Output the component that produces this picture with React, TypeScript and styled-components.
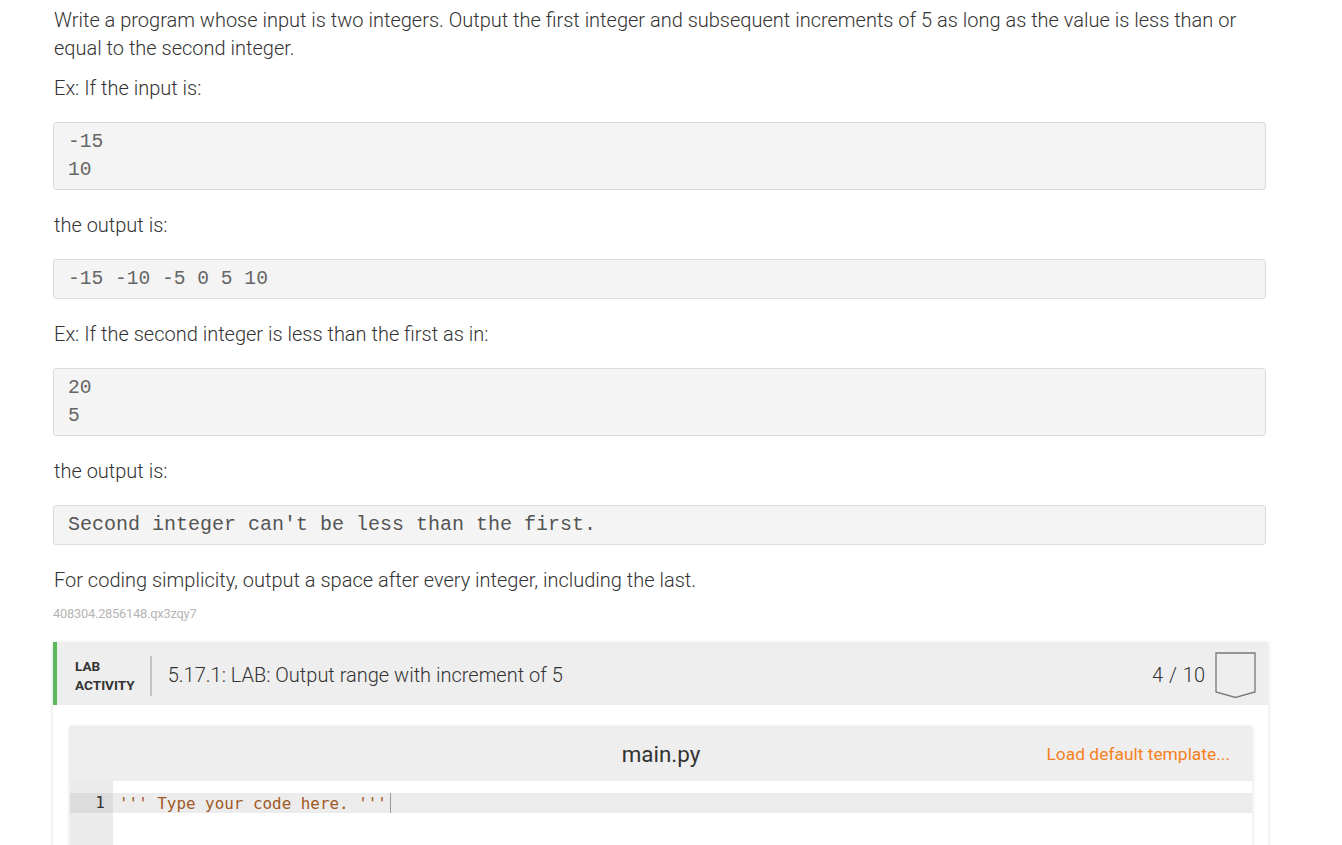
import React from "react";
import styled, { createGlobalStyle } from "styled-components";

const Global = createGlobalStyle`
  html, body { margin: 0; padding: 0; background: #fff; }
  body { font-family: Roboto, "Noto Sans", Arial, sans-serif; color: #333; }
`;

const Page = styled.div`
  padding: 6px 76px 40px 53px;
  width: 1213px;
`;

const Para = styled.p`
  margin: 12px 0;
  font-size: 20px;
  font-weight: 300;
  line-height: 28px;
  color: #333;
  padding-left: 1px;
  &:first-child { margin-top: 0; }
`;

const Pre = styled.pre<{ $courier?: boolean }>`
  margin: 20px 0 21px;
  padding: 5px 14px 5px;
  background: #f4f4f4;
  border: 1px solid #dcdcdc;
  border-radius: 3px;
  font-family: "Liberation Mono", "Courier New", monospace;
  font-size: ${(p) => (p.$courier ? "20px" : "19.6px")};
  line-height: 28px;
  color: ${(p) => (p.$courier ? "#555" : "#666")};
  white-space: pre;
`;

const Ident = styled.div`
  margin-top: 12px;
  font-size: 12.8px;
  line-height: 16px;
  color: #b5b5b5;
  font-weight: 400;
  letter-spacing: -0.2px;
`;

const Card = styled.section`
  margin-top: 20px;
  width: 1215px;
  background: #fff;
  box-shadow: 0 1px 4px rgba(0, 0, 0, 0.16);
`;

const CardHeader = styled.header`
  display: flex;
  align-items: center;
  height: 63px;
  background: #eeeeee;
  border-left: 4px solid #5cb85c;
  padding: 0 12px 0 18px;
`;

const Kind = styled.div`
  font-size: 13.6px;
  font-weight: 700;
  line-height: 19px;
  color: #333;
  margin-top: 4px;
`;

const Divider = styled.div`
  width: 2px;
  height: 40px;
  background: #c2c2c2;
  margin: 4px 16px 0 15px;
`;

const Title = styled.h2`
  flex: 1;
  margin: 2px 0 0;
  font-size: 20px;
  font-weight: 300;
  color: #333;
`;

const Score = styled.span`
  font-size: 20px;
  font-weight: 300;
  color: #333;
  margin: 2px 10px 0 0;
  word-spacing: 1px;
`;

const Badge = styled.svg`
  display: block;
  width: 41px;
  height: 46px;
  margin-top: 2px;
`;

const CardBody = styled.div`
  padding: 21px 16px 0 17px;
`;

const Editor = styled.div`
  background: #fff;
  box-shadow: 0 1px 4px rgba(0, 0, 0, 0.16);
`;

const EditorBar = styled.div`
  position: relative;
  display: flex;
  align-items: center;
  justify-content: center;
  height: 55px;
  background: #eeeeee;
`;

const FileName = styled.span`
  font-size: 22.4px;
  font-weight: 400;
  color: #333;
`;

const LoadLink = styled.a`
  position: absolute;
  right: 22px;
  top: 50%;
  transform: translateY(-50%);
  font-size: 17.4px;
  font-weight: 400;
  color: #f5821f;
  text-decoration: none;
`;

const Code = styled.div`
  display: grid;
  grid-template-columns: 43px 1fr;
  min-height: 140px;
`;

const Gutter = styled.div`
  background: #ebebeb;
  padding-top: 12px;
`;

const LineNo = styled.div<{ $active?: boolean }>`
  height: 20px;
  line-height: 20px;
  text-align: right;
  padding-right: 8px;
  font-family: "DejaVu Sans Mono", "Liberation Mono", monospace;
  font-size: 16px;
  color: #333;
  background: ${(p) => (p.$active ? "#dcdcdc" : "transparent")};
`;

const Lines = styled.div`
  padding-top: 12px;
`;

const Line = styled.div<{ $active?: boolean }>`
  display: flex;
  align-items: center;
  height: 20px;
  padding-left: 6px;
  background: ${(p) => (p.$active ? "#ececec" : "transparent")};
  font-family: "DejaVu Sans Mono", "Liberation Mono", monospace;
  font-size: 15.9px;
  color: #a0591f;
  white-space: pre;
`;

const Cursor = styled.span`
  display: inline-block;
  width: 1px;
  height: 20px;
  background: #999;
  margin-left: 3px;
`;

export default function App() {
  return (
    <>
      <Global />
      <Page>
        <Para>
          Write a program whose input is two integers. Output the first integer and subsequent
          increments of 5 as long as the value is less than or equal to the second integer.
        </Para>
        <Para>Ex: If the input is:</Para>
        <Pre>{"-15\n10"}</Pre>
        <Para>the output is:</Para>
        <Pre>-15 -10 -5 0 5 10</Pre>
        <Para>Ex: If the second integer is less than the first as in:</Para>
        <Pre>{"20\n5"}</Pre>
        <Para>the output is:</Para>
        <Pre $courier>Second integer can't be less than the first.</Pre>
        <Para>For coding simplicity, output a space after every integer, including the last.</Para>
        <Ident>408304.2856148.qx3zqy7</Ident>
        <Card>
          <CardHeader>
            <Kind>
              LAB
              <br />
              ACTIVITY
            </Kind>
            <Divider />
            <Title>5.17.1: LAB: Output range with increment of 5</Title>
            <Score>4 / 10</Score>
            <Badge viewBox="0 0 41 46">
              <polygon
                points="1,1 40,1 40,40 20.5,45.5 1,40"
                fill="none"
                stroke="#777"
                strokeWidth="1.3"
              />
            </Badge>
          </CardHeader>
          <CardBody>
            <Editor>
              <EditorBar>
                <FileName>main.py</FileName>
                <LoadLink href="#">Load default template...</LoadLink>
              </EditorBar>
              <Code>
                <Gutter>
                  <LineNo $active>1</LineNo>
                </Gutter>
                <Lines>
                  <Line $active>
                    ''' Type your code here. '''
                    <Cursor />
                  </Line>
                </Lines>
              </Code>
            </Editor>
          </CardBody>
        </Card>
      </Page>
    </>
  );
}
